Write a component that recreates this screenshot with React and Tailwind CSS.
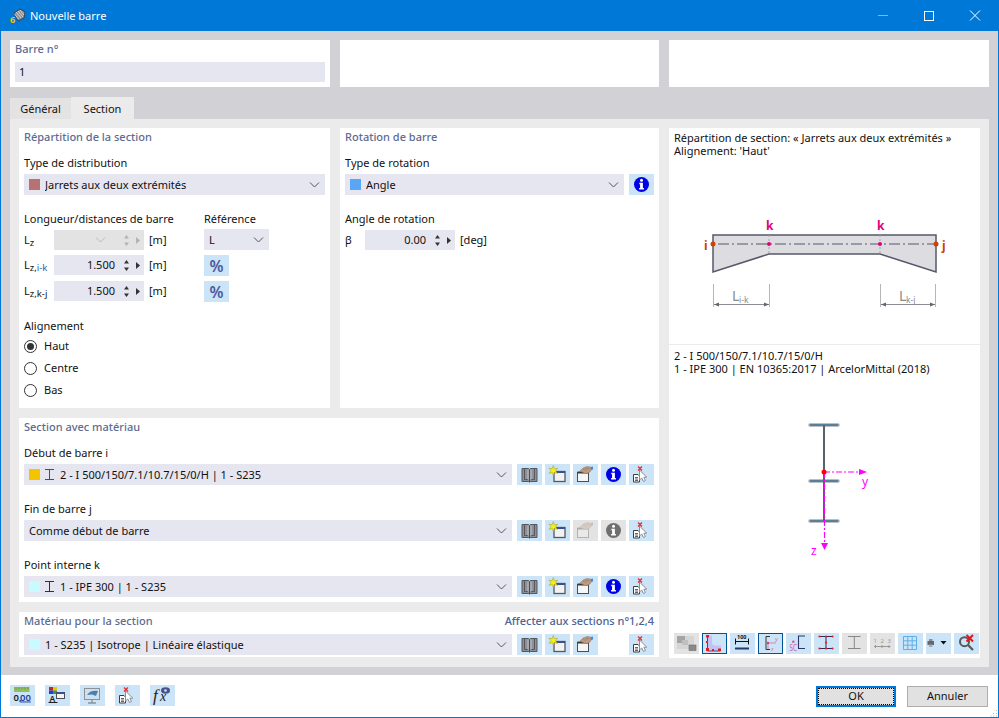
import React from "react";

const BookIcon = () => (
  <svg width="25" height="21" viewBox="0 0 25 21">
    <path d="M5 4.500h6.500l1 .8 1-.8H20v13h-6.500l-1 .8-1-.8H5z" fill="#8e9096" stroke="#55575c" />
    <path d="M7.500 5v10.500h3.500M17.500 5v10.500H14" stroke="#55575c" strokeWidth="1" fill="none" />
    <path d="M11 5.500v10M14 5.500v10" stroke="#bcc2c9" strokeWidth="1" />
    <path d="M12.500 5.500v12.500" stroke="#4b4d52" strokeWidth="1" />
  </svg>
);

const NewIcon = () => (
  <svg width="25" height="21" viewBox="0 0 25 21">
    <rect x="9" y="7.500" width="11" height="10" fill="#f2f2f2" stroke="#55575c" strokeWidth="1.300" />
    <rect x="9" y="7" width="11" height="2" fill="#3d4f8f" />
    <path d="M8.300 1.500l1.100 3.200 3.300-.5-2.100 2.500 1.900 2.700-3.200-.9-1 2.900-1-2.900-3.200.9 1.900-2.700-2.100-2.500 3.300.5z" fill="#f6f200" stroke="#a09820" strokeWidth="0.500" />
  </svg>
);

const HandIcon = ({ disabled }) => (
  <svg width="25" height="21" viewBox="0 0 25 21" opacity={disabled ? 0.32 : 1}>
    <rect x="4.500" y="8.500" width="11" height="9" fill="#f6f6f6" stroke="#4b4d52" />
    <rect x="4.500" y="7.500" width="11" height="2" fill="#3b3b3b" />
    <path d="M7 7l3-3 4-1.500 3.500 .5 1 2.500-1.500 2.500-3 1.500-3-.5z" fill="#bd9a80" stroke="#93745f" strokeWidth="0.500" />
    <path d="M10 5l3 1.500M12 4l3 1.500M14 3.500l2.500 1.500" stroke="#8d6f5c" strokeWidth="0.500" />
    <path d="M17.500 3l2.500-.5v3l-2 .5z" fill="#4a88c9" />
  </svg>
);

const InfoIcon = ({ disabled }) => (
  <svg width="25" height="21" viewBox="0 0 25 21">
    <circle cx="12.500" cy="10.500" r="7.500" fill={disabled ? "#6f6f6f" : "#0000e6"} />
    <circle cx="12.500" cy="6.300" r="1.500" fill="#fff" />
    <path d="M10.300 8.700h3.600v5.200h1v1.500h-4.800v-1.500h1v-3.700h-.8z" fill="#fff" />
  </svg>
);

const CursorIcon = () => (
  <svg width="25" height="21" viewBox="0 0 25 21">
    <path d="M4.500 10.500h4.500l1.500 1.500v6H4.500z" fill="#fff" stroke="#3d3d3d" />
    <path d="M6 13.500h3M6 15h3M6 16.500h3" stroke="#3d3d3d" strokeWidth="0.800" />
    <path d="M10.500 6v10l2.300-2 1.700 3.500 2-1-1.700-3.300h3z" fill="#fff" stroke="#8b8f96" />
    <path d="M9 2.500l4 4M13 2.500l-4 4" stroke="#e03030" strokeWidth="1.300" />
  </svg>
);

const DimIcon = () => (
  <svg width="25" height="21" viewBox="0 0 25 21">
    <rect x="4" y="2" width="15.500" height="5" fill="#8fbf5f" />
    <path d="M6 2v2.500M9 2v2.500M12 2v2.500M15 2v2.500M18 2v2.500" stroke="#5f8f3f" strokeWidth="0.700" />
    <text x="3.500" y="15.500" fontSize="9.500" fontWeight="600" fill="#222">0,</text>
    <text x="10" y="15.500" fontSize="9.500" fontWeight="600" fill="#24409a" textDecoration="underline">00</text>
  </svg>
);

const ColorsIcon = () => (
  <svg width="25" height="21" viewBox="0 0 25 21">
    <rect x="4" y="2" width="4" height="3.500" fill="#d02020" />
    <rect x="8" y="2" width="4" height="3.500" fill="#e8c800" />
    <rect x="4" y="5.500" width="4" height="3.500" fill="#2040d0" />
    <rect x="8" y="5.500" width="4" height="3.500" fill="#30a030" />
    <text x="4.500" y="16.500" fontSize="8.500" fontWeight="600" fill="#222">A</text>
    <path d="M3.500 17.500h9" stroke="#222" />
    <rect x="11.500" y="7.500" width="8" height="6" fill="#f4f4f4" stroke="#4b4d52" />
    <rect x="11.500" y="7" width="8" height="2" fill="#3d4f8f" />
  </svg>
);

const DisplayIcon = () => (
  <svg width="25" height="21" viewBox="0 0 25 21">
    <rect x="4.500" y="3.500" width="15" height="11" fill="#cfe1ef" stroke="#8d9096" />
    <path d="M7 10c2-4 7-5 11-4l-2 5-4-1.500z" fill="#4a7fb0" />
    <path d="M12 15v2.500M8 18h8" stroke="#8d9096" strokeWidth="1.300" />
  </svg>
);

const FormulaIcon = () => (
  <svg width="25" height="21" viewBox="0 0 25 21">
    <text x="3" y="16" fontSize="17" fontStyle="italic" fontFamily="Liberation Serif, serif" fill="#222">f</text>
    <text x="10" y="16" fontSize="14" fontStyle="italic" fontFamily="Liberation Serif, serif" fill="#222">x</text>
    <ellipse cx="15.500" cy="5.500" rx="4.500" ry="3.200" fill="#47548f" />
    <circle cx="15.500" cy="5.500" r="1.300" fill="#cfe1ef" />
  </svg>
);

const ToolIcons = {
  shade: (
    <svg width="25" height="21" viewBox="0 0 25 21">
      <rect x="3" y="3" width="17" height="13" fill="#d5d5d5" />
      <rect x="3" y="3" width="8" height="7" fill="#a5a5a5" />
      <rect x="8" y="7" width="6" height="5" fill="#c0c0c0" />
      <rect x="15" y="12" width="7" height="5.500" fill="#8a8a8a" stroke="#6b6b6b" strokeWidth="0.600" />
    </svg>
  ),
  angle: (
    <svg width="23" height="19" viewBox="0 0 23 19">
      <path d="M4 1.500h5v7c0 2 1 3 3 3h6v5H4z" fill="#c5c0f5" />
      <path d="M4.500 1.500v15.500h13" stroke="#3b4a8a" strokeWidth="1" fill="none" />
      <path d="M3 1h3v2.500H3zM3 7h2v2H3zM3 14h3v3H3zM9 15h2v2H9zM15 14.500h3v2.500h-3z" fill="#e02020" />
    </svg>
  ),
  dim: (
    <svg width="25" height="21" viewBox="0 0 25 21">
      <text x="7" y="5.500" fontSize="5.500" fontWeight="700" fill="#111">100</text>
      <path d="M5 8.500h14" stroke="#111" />
      <path d="M5.500 5.500v6M18.500 5.500v6" stroke="#111" />
      <rect x="5" y="14.500" width="14" height="2" fill="#2b3566" />
    </svg>
  ),
  axes: (
    <svg width="23" height="19" viewBox="0 0 23 19">
      <path d="M11 2.500H7v13h4" stroke="#333" fill="none" />
      <path d="M9 9h8M9 9v6" stroke="#d070a0" strokeWidth="0.800" />
      <circle cx="9" cy="9" r="1.200" fill="#d04080" />
      <text x="16" y="6.500" fontSize="5.500" fill="#d070a0">y</text>
      <text x="12" y="17" fontSize="5.500" fill="#d070a0">z</text>
    </svg>
  ),
  sc: (
    <svg width="25" height="21" viewBox="0 0 25 21">
      <path d="M19 3h-6.500v12.500H19" stroke="#2b3566" fill="none" strokeWidth="1.100" />
      <circle cx="7.300" cy="8.700" r="1.300" fill="#d0609a" />
      <text x="3.500" y="18" fontSize="8" fill="#d0609a" textLength="7.500" lengthAdjust="spacingAndGlyphs">SC</text>
    </svg>
  ),
  ibeam: (
    <svg width="25" height="21" viewBox="0 0 25 21">
      <path d="M5.500 3.500h13M5.500 15.500h13M12 3.500v12" stroke="#2b2b55" strokeWidth="1" />
      <g fill="#e02020">
        <circle cx="5.500" cy="3.500" r="1.100" />
        <circle cx="12" cy="3.500" r="1.100" />
        <circle cx="18.500" cy="3.500" r="1.100" />
        <circle cx="12" cy="9.500" r="1.100" />
        <circle cx="5.500" cy="15.500" r="1.100" />
        <circle cx="12" cy="15.500" r="1.100" />
        <circle cx="18.500" cy="15.500" r="1.100" />
      </g>
    </svg>
  ),
  ibeamOff: (
    <svg width="25" height="21" viewBox="0 0 25 21">
      <path d="M6 3.500h12.500M6 15.500h12.500M12.300 3.500v12" stroke="#888" strokeWidth="1" />
    </svg>
  ),
  numbers: (
    <svg width="25" height="21" viewBox="0 0 25 21">
      <text x="3.500" y="9.500" fontSize="6" fill="#999">1</text>
      <text x="10.500" y="9.500" fontSize="6" fill="#999">2</text>
      <text x="17.500" y="9.500" fontSize="6" fill="#999">3</text>
      <path d="M4 13.500h16.500M5.500 12v3M12 12v3M19 12v3" stroke="#999" />
    </svg>
  ),
  grid: (
    <svg width="25" height="21" viewBox="0 0 25 21">
      <path d="M5.500 3.500h13v13h-13zM5.500 7.800h13M5.500 12.200h13M9.800 3.500v13M14.200 3.500v13" stroke="#5fb0e8" fill="none" />
    </svg>
  ),
  print: (
    <svg width="25" height="21" viewBox="0 0 25 21">
      <rect x="1.500" y="8" width="6.500" height="4" fill="#66686c" />
      <rect x="3" y="6" width="3.500" height="2" fill="#8d8f93" />
      <rect x="3" y="11.500" width="3.500" height="2.500" fill="#a8aaae" />
      <path d="M14.500 8h6l-3 3.500z" fill="#111" />
    </svg>
  ),
  reset: (
    <svg width="25" height="21" viewBox="0 0 25 21">
      <circle cx="10.500" cy="8.700" r="4.500" fill="none" stroke="#55585e" strokeWidth="2" />
      <path d="M14 12l5 5" stroke="#55585e" strokeWidth="2.200" />
      <path d="M12.500 2l6.500 6.500M19 2l-6.500 6.500" stroke="#e01818" strokeWidth="2" />
    </svg>
  ),
};

const Chevron = ({ color = "#555" }) => (
  <svg width="11" height="6" viewBox="0 0 11 6" className="shrink-0">
    <path d="M1 .5l4.500 4.500L10 .5" fill="none" stroke={color} strokeWidth="1" />
  </svg>
);

const IBeamGlyph = ({ color }) => (
  <svg width="9" height="11" viewBox="0 0 9 11" className="shrink-0">
    <path d="M0 .5h9M0 10.500h9M4.500 .5v10" stroke={color} strokeWidth="1" />
  </svg>
);

const Heading = ({ children }) => (
  <div className="h-[18px] leading-[18px] font-medium text-[#5d6b90]">{children}</div>
);

const Label = ({ children, className = "" }) => (
  <div className={`h-4 leading-4 ${className}`}>{children}</div>
);

const Select = ({ swatch, beam, children, className = "" }) => (
  <div className={`h-[21px] bg-[#e6e6f0] flex items-center pl-[5px] pr-[5px] ${className}`}>
    {swatch && <span className="w-[11px] h-[11px] mr-[5px] shrink-0" style={{ background: swatch }} />}
    {beam && <span className="mr-[6px] flex"><IBeamGlyph color={beam} /></span>}
    <span className="flex-1 truncate pt-px">{children}</span>
    <Chevron />
  </div>
);

const Btn = ({ children, off, active, className = "" }) => (
  <div
    className={`h-[21px] w-[25px] flex items-center justify-center shrink-0 ${
      off ? "bg-[#e3e3e3]" : "bg-[#cce4f7]"
    } ${active ? "border border-[#005499]" : ""} ${className}`}
  >
    {children}
  </div>
);

const Spinner = ({ value, disabled }) => {
  const c = disabled ? "#b3b3b3" : "#333";
  return (
    <div className={`w-[90px] h-5 flex items-center justify-end ${disabled ? "bg-[#e3e3e3]" : "bg-[#e6e6f0]"}`}>
      {disabled && (
        <span className="mr-[9px] flex">
          <Chevron color="#b9b9b9" />
        </span>
      )}
      <span className="mr-[9px]">{value}</span>
      <svg width="5" height="13" viewBox="0 0 5 13" className="mr-[7px]">
        <path d="M0 4.500L2.500 1 5 4.500zM0 8.500L2.500 12 5 8.500z" fill={c} />
      </svg>
      <svg width="4" height="7" viewBox="0 0 4 7" className="mr-[4px]">
        <path d="M0 0l4 3.500L0 7z" fill={c} />
      </svg>
    </div>
  );
};

const LengthRow = ({ name, value, disabled, className = "" }) => (
  <div className={`flex items-center h-5 ${className}`}>
    <span className="w-[30px]">{name}</span>
    <Spinner value={value} disabled={disabled} />
    <span className="ml-[5px]">[m]</span>
  </div>
);

const Percent = ({ className = "" }) => (
  <Btn className={`text-[16px] font-semibold text-[#4b5a9c] ${className}`}>%</Btn>
);

const Radio = ({ checked, children }) => (
  <div className="flex items-center h-[22px]">
    <span className="w-[13px] h-[13px] rounded-full border border-[#333] flex items-center justify-center bg-white">
      {checked && <span className="w-[7px] h-[7px] rounded-full bg-[#333]" />}
    </span>
    <span className="ml-[7px]">{children}</span>
  </div>
);

const SectionButtons = ({ off, noInfo }) => (
  <div className="flex gap-[3px] ml-[5px]">
    <Btn><BookIcon /></Btn>
    <Btn><NewIcon /></Btn>
    <Btn off={off}><HandIcon disabled={off} /></Btn>
    {noInfo ? <div className="w-[25px]" /> : <Btn off={off}><InfoIcon disabled={off} /></Btn>}
    <Btn><CursorIcon /></Btn>
  </div>
);

const sub = "text-[9.500px] align-[-2px] leading-none";

const App = () => {
  return (
    <div className="w-[999px] h-[718px] flex flex-col bg-[#d2d1d5] border-x border-b border-[#0078d7] text-[11px] text-[#111] font-['Noto_Sans','Open_Sans',sans-serif] overflow-hidden">
      {/* Title bar */}
      <div className="h-[31px] bg-[#0078d7] flex items-center pl-[9px] shrink-0 text-white">
        <svg width="16" height="16" viewBox="0 0 16 16" className="mr-[4px] mt-px">
          <path d="M4 5l6-4 5 3-1 6-6 3z" fill="#8d8f96" stroke="#33353c" strokeWidth="0.800" />
          <path d="M6 4l5 6M8 3l5 6M10 2l4 5M4.500 6l4 5" stroke="#e6e6e6" strokeWidth="0.800" />
          <text x="0" y="14.500" fontSize="9" fontWeight="700" fill="#f2c200">6</text>
        </svg>
        <span className="mt-px">Nouvelle barre</span>
        <div className="ml-auto flex items-center">
          <svg width="46" height="31" viewBox="0 0 46 31"><path d="M18 15.500h10" stroke="#7fb8e8" /></svg>
          <svg width="46" height="31" viewBox="0 0 46 31"><rect x="18.500" y="11.500" width="9" height="9" fill="none" stroke="#fff" /></svg>
          <svg width="46" height="31" viewBox="0 0 46 31"><path d="M18 10.500l10 10M28 10.500l-10 10" stroke="#fff" /></svg>
        </div>
      </div>

      {/* Top cards */}
      <div className="flex gap-[10px] mt-[9px] px-[9px] h-[47px] shrink-0">
        <div className="w-[320px] bg-white px-[5px]">
          <Heading>Barre n°</Heading>
          <div className="h-5 mt-1 bg-[#e6e6f0] flex items-center px-[4px]">1</div>
        </div>
        <div className="w-[319px] bg-white" />
        <div className="w-[320px] bg-white" />
      </div>

      {/* Tabs */}
      <div className="flex mt-[10px] px-[9px] h-[22px] shrink-0 items-end">
        <div className="w-[61px] h-[21px] bg-[#e3e3e3] flex items-center justify-center pt-px">Général</div>
        <div className="w-[63px] h-[22px] bg-[#ebebeb] flex items-center justify-center pt-[2px]">Section</div>
      </div>

      {/* Panel */}
      <div className="mx-[9px] bg-[#ebebeb] h-[548px] p-[9px] flex gap-[10px] shrink-0">
        <div className="w-[640px] flex flex-col gap-[10px]">
          <div className="flex gap-[10px] h-[280px]">
            {/* Répartition */}
            <div className="w-[311px] bg-white px-[5px]">
              <Heading>Répartition de la section</Heading>
              <Label className="mt-[9px]">Type de distribution</Label>
              <Select swatch="#b97272" className="mt-[3px]">Jarrets aux deux extrémités</Select>
              <div className="flex mt-4">
                <div className="w-[180px]">
                  <Label>Longueur/distances de barre</Label>
                  <LengthRow className="mt-[3px]" name={<>L<span className={sub}>z</span></>} value="" disabled />
                  <LengthRow className="mt-[5px]" name={<>L<span className={sub}>z,<span className="text-[#2f5f9f]">i-k</span></span></>} value="1.500" />
                  <LengthRow className="mt-[6px]" name={<>L<span className={sub}>z,k-j</span></>} value="1.500" />
                </div>
                <div className="w-[65px]">
                  <Label>Référence</Label>
                  <Select className="mt-[2px]">L</Select>
                  <Percent className="mt-[5px]" />
                  <Percent className="mt-[5px]" />
                </div>
              </div>
              <Label className="mt-4">Alignement</Label>
              <div className="mt-[1px]">
                <Radio checked>Haut</Radio>
                <Radio>Centre</Radio>
                <Radio>Bas</Radio>
              </div>
            </div>

            {/* Rotation */}
            <div className="w-[319px] bg-white px-[5px]">
              <Heading>Rotation de barre</Heading>
              <Label className="mt-[9px]">Type de rotation</Label>
              <div className="flex gap-[5px] mt-[3px]">
                <Select swatch="#58a6f5" className="flex-1">Angle</Select>
                <Btn><InfoIcon /></Btn>
              </div>
              <Label className="mt-4">Angle de rotation</Label>
              <div className="flex items-center h-5 mt-[3px]">
                <span className="w-5">β</span>
                <Spinner value="0.00" />
                <span className="ml-[5px]">[deg]</span>
              </div>
            </div>
          </div>

          {/* Section avec matériau */}
          <div className="h-[184px] bg-white px-[5px]">
            <Heading>Section avec matériau</Heading>
            <Label className="mt-[9px]">Début de barre i</Label>
            <div className="flex mt-[3px]">
              <Select swatch="#f4c400" beam="#3b4aa0" className="flex-1">2 - I 500/150/7.1/10.7/15/0/H | 1 - S235</Select>
              <SectionButtons />
            </div>
            <Label className="mt-4">Fin de barre j</Label>
            <div className="flex mt-[3px]">
              <Select className="flex-1">Comme début de barre</Select>
              <SectionButtons off />
            </div>
            <Label className="mt-4">Point interne k</Label>
            <div className="flex mt-[3px]">
              <Select swatch="#c8fbff" beam="#1b2a90" className="flex-1">1 - IPE 300 | 1 - S235</Select>
              <SectionButtons />
            </div>
          </div>

          {/* Matériau */}
          <div className="h-[45px] bg-white px-[5px]">
            <div className="flex justify-between">
              <Heading>Matériau pour la section</Heading>
              <span className="h-[18px] leading-[18px] font-medium text-[#4d6296]">Affecter aux sections n°1,2,4</span>
            </div>
            <div className="flex mt-[4px]">
              <Select swatch="#c8fbff" className="flex-1">1 - S235 | Isotrope | Linéaire élastique</Select>
              <SectionButtons noInfo />
            </div>
          </div>
        </div>

        {/* Right panel */}
        <div className="w-[311px] bg-white flex flex-col">
          <div className="h-[217px] border-b border-[#ebebeb] flex flex-col">
            <div className="px-[5px] pt-[3px] leading-[13px] h-[32px]">
              <div>Répartition de section: « Jarrets aux deux extrémités »</div>
              <div>Alignement: 'Haut'</div>
            </div>
            <svg width="311" height="184" viewBox="669 160 311 184">
              <path d="M713 235h223v37l-56-18H769l-56 18z" fill="#dcdce1" stroke="#55586a" strokeWidth="1.500" />
              <path d="M718 244h218" stroke="#55586a" strokeDasharray="11 3 2 3" />
              <path d="M769 235v19M880 235v19" stroke="#a5a5aa" strokeDasharray="2 2" />
              <circle cx="713" cy="244" r="2.500" fill="#d04000" />
              <circle cx="936" cy="244" r="2.500" fill="#d04000" />
              <circle cx="769" cy="244" r="2" fill="#e0007a" />
              <circle cx="880" cy="244" r="2" fill="#e0007a" />
              <g fontFamily="Noto Sans, sans-serif" fontSize="12" fontWeight="700">
                <text x="766" y="230" fill="#e0007a">k</text>
                <text x="877" y="230" fill="#e0007a">k</text>
                <text x="704" y="250" fill="#d04000">i</text>
                <text x="942" y="250" fill="#d04000">j</text>
              </g>
              <path d="M713.500 284v23M769.500 284v23M880.500 284v23M935.500 284v23" stroke="#b5b5ba" />
              <path d="M714 304.500h55M881 304.500h54" stroke="#8d8d95" />
              <path d="M714 304.500l5-2v4zM769 304.500l-5-2v4zM881 304.500l5-2v4zM935 304.500l-5-2v4z" fill="#666" />
              <g fontFamily="Noto Sans, sans-serif" fill="#8a8a8a">
                <text x="732" y="301" fontSize="14">L</text>
                <text x="739" y="303" fontSize="8.500">i-k</text>
                <text x="899" y="301" fontSize="14">L</text>
                <text x="906" y="303" fontSize="8.500">k-j</text>
              </g>
            </svg>
          </div>
          <div className="flex-1 flex flex-col">
            <div className="px-[5px] pt-[4px] leading-[13px] h-[33px]">
              <div>2 - I 500/150/7.1/10.7/15/0/H</div>
              <div>1 - IPE 300 | EN 10365:2017 | ArcelorMittal (2018)</div>
            </div>
            <svg width="311" height="250" viewBox="669 378 311 250">
              <g stroke="#a5aab0" strokeWidth="3.500" strokeLinecap="round">
                <path d="M810 425h28M810 481h28M810 521h28" />
              </g>
              <g stroke="#5a7f9b" strokeWidth="2">
                <path d="M810 425h28M810 481h28M810 521h28" />
              </g>
              <path d="M824 425v96" stroke="#55646f" strokeWidth="2" />
              <path d="M824 472h38M824.500 472v72" stroke="#ff00ff" strokeDasharray="6 2 2 2" strokeWidth="1.200" />
              <path d="M859 469l8 3-8 3zM821 543h7l-3.500 7z" fill="#ff00ff" />
              <circle cx="824" cy="472" r="2.500" fill="#ff0000" />
              <g fontFamily="Noto Sans, sans-serif" fontSize="12" fill="#ff00ff">
                <text x="862" y="486">y</text>
                <text x="811" y="555">z</text>
              </g>
            </svg>
            <div className="flex gap-[3px] px-[5px] mt-[5px]">
              <Btn off>{ToolIcons.shade}</Btn>
              <Btn active>{ToolIcons.angle}</Btn>
              <Btn>{ToolIcons.dim}</Btn>
              <Btn active>{ToolIcons.axes}</Btn>
              <Btn>{ToolIcons.sc}</Btn>
              <Btn>{ToolIcons.ibeam}</Btn>
              <Btn off>{ToolIcons.ibeamOff}</Btn>
              <Btn off>{ToolIcons.numbers}</Btn>
              <Btn>{ToolIcons.grid}</Btn>
              <Btn>{ToolIcons.print}</Btn>
              <Btn>{ToolIcons.reset}</Btn>
            </div>
          </div>
        </div>
      </div>

      {/* Footer */}
      <div className="mt-2 flex-1 bg-white flex items-start pt-[10px] pl-[9px] pr-[10px] relative">
        <div className="flex gap-[10px]">
          <Btn><DimIcon /></Btn>
          <Btn><ColorsIcon /></Btn>
          <Btn><DisplayIcon /></Btn>
          <Btn><CursorIcon /></Btn>
          <Btn><FormulaIcon /></Btn>
        </div>
        <div className="ml-auto flex gap-[11px] items-center mt-px">
          <div className="w-20 h-[21px] bg-[#e1e1e1] border-2 border-[#0078d7] flex items-center justify-center">
            <span className="w-full h-full border border-dotted border-black flex items-center justify-center">OK</span>
          </div>
          <div className="w-[81px] h-[21px] bg-[#e1e1e1] border border-[#adadad] flex items-center justify-center">Annuler</div>
        </div>
        <svg width="8" height="8" viewBox="0 0 8 8" className="absolute right-0 bottom-0">
          <path d="M6 1h1v1H6zM6 4h1v1H6zM3 4h1v1H3zM6 6.500h1v1H6zM3 6.500h1v1H3zM.5 6.500h1v1h-1z" fill="#b8b8b8" />
        </svg>
      </div>
    </div>
  );
};

export default App;
